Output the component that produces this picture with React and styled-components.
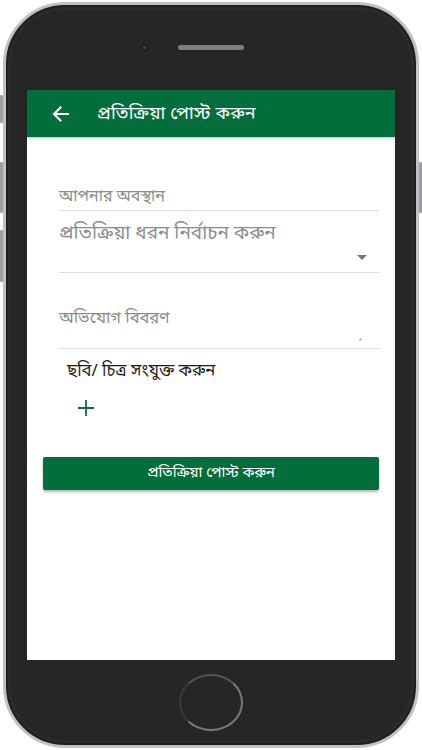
import React from 'react'
import styled, { createGlobalStyle } from 'styled-components'

const GlobalStyle = createGlobalStyle`
  html, body {
    margin: 0;
    padding: 0;
    background: #ffffff;
  }
  body {
    font-family: "Noto Sans Bengali", "Lohit Bengali", "Noto Sans", "DejaVu Sans", sans-serif;
  }
`

const Page = styled.div`
  width: 422px;
  height: 750px;
  padding: 2px 3px;
  box-sizing: border-box;
`

const Phone = styled.div`
  position: relative;
  width: 416px;
  height: 746px;
  box-sizing: border-box;
  border: 3px solid #c2c2c4;
  border-radius: 62px;
  background: #262626;
  box-shadow: inset 0 0 0 2px #1f1f1f, inset 0 0 0 5px #2b2b2b;
  display: flex;
  flex-direction: column;
  align-items: center;
`

const SideKey = styled.div`
  position: absolute;
  top: ${p => p.$top}px;
  height: ${p => p.$h}px;
  width: 3px;
  background: #9d9da2;
  border-radius: 1px;
  ${p => (p.$right ? 'right: -6px;' : 'left: -6px;')}
`

const TopBezel = styled.div`
  height: 85px;
  width: 100%;
  display: flex;
  justify-content: center;
  align-items: flex-start;
  padding-top: 39px;
  box-sizing: border-box;
  gap: 30px;
`

const Camera = styled.div`
  width: 7px;
  height: 7px;
  border-radius: 50%;
  background: #3c3c4c;
  box-shadow: inset 0 0 0 1.5px #1a1a1a;
  visibility: ${p => (p.$ghost ? 'hidden' : 'visible')};
`

const Speaker = styled.div`
  width: 66px;
  height: 5px;
  margin-top: 1px;
  border-radius: 3px;
  background: #7e7e7e;
`

const Screen = styled.div`
  width: 368px;
  height: 570px;
  background: #ffffff;
  display: flex;
  flex-direction: column;
`

const AppBar = styled.div`
  height: 47px;
  background: #036e3c;
  display: flex;
  align-items: center;
  padding-left: 25px;
  box-shadow: 0 1px 3px rgba(0, 0, 0, 0.25);
  color: #ffffff;
`

const Title = styled.div`
  margin-left: 28px;
  font-size: 18px;
  letter-spacing: 0.2px;
`

const Form = styled.div`
  padding: 49px 16px 0 16px;
  display: flex;
  flex-direction: column;
`

const Field = styled.div`
  margin-left: 16px;
  border-bottom: 1px solid #dedede;
  height: ${p => p.$h}px;
  box-sizing: border-box;
  position: relative;
`

const Placeholder = styled.div`
  color: #8c8c8c;
  font-size: ${p => p.$size}px;
  line-height: 1.2;
  padding-top: ${p => p.$pt || 0}px;
`

const Caret = styled.div`
  position: absolute;
  right: 12px;
  bottom: 12px;
  width: 0;
  height: 0;
  border-left: 5px solid transparent;
  border-right: 5px solid transparent;
  border-top: 5px solid #777777;
`

const Grip = styled.div`
  position: absolute;
  right: 17px;
  bottom: 8px;
  width: 3px;
  height: 1px;
  background: #9a9a9a;
  transform: rotate(-45deg);
`

const AttachLabel = styled.div`
  margin: 12px 0 0 24px;
  font-size: 16.7px;
  color: #1c1c1c;
`

const AddButton = styled.div`
  margin: 17px 0 0 35px;
  width: 16px;
  height: 16px;
  color: #0b6b36;
`

const SubmitButton = styled.button`
  margin-top: 41px;
  height: 33px;
  border: none;
  border-radius: 2px;
  background: #036e3c;
  color: #ffffff;
  font-family: inherit;
  font-size: 14.7px;
  box-shadow: 0 2px 3px rgba(0, 0, 0, 0.3);
  cursor: pointer;
`

const BottomBezel = styled.div`
  flex: 1;
  width: 100%;
  display: flex;
  align-items: center;
  justify-content: center;
`

const HomeButton = styled.div`
  width: 60px;
  height: 53px;
  border-radius: 50%;
  border: 2px solid #7a7a7a;
  border-left-color: #3a3a3a;
  border-top-color: #555555;
`

function App() {
  return (
    <Page>
      <GlobalStyle />
      <Phone>
        <SideKey $top={90} $h={28} />
        <SideKey $top={157} $h={51} />
        <SideKey $top={225} $h={52} />
        <SideKey $right $top={157} $h={51} />
        <TopBezel>
          <Camera />
          <Speaker />
          <Camera $ghost />
        </TopBezel>
        <Screen>
          <AppBar>
            <svg width="17" height="16" viewBox="0 0 17 16" fill="none" stroke="#fff" strokeWidth="2" strokeLinecap="square">
              <path d="M16 8H2.5" />
              <path d="M8.5 1.5L2 8l6.5 6.5" />
            </svg>
            <Title>প্রতিক্রিয়া পোস্ট করুন</Title>
          </AppBar>
          <Form>
            <Field $h={25}>
              <Placeholder $size={16} $pt={2}>আপনার অবস্থান</Placeholder>
            </Field>
            <Field $h={62}>
              <Placeholder $size={19} $pt={13}>প্রতিক্রিয়া ধরন নির্বাচন করুন</Placeholder>
              <Caret />
            </Field>
            <Field $h={76}>
              <Placeholder $size={16.5} $pt={37}>অভিযোগ বিবরণ</Placeholder>
              <Grip />
            </Field>
            <AttachLabel>ছবি/ চিত্র সংযুক্ত করুন</AttachLabel>
            <AddButton>
              <svg width="16" height="16" viewBox="0 0 16 16" stroke="currentColor" strokeWidth="1.8">
                <path d="M8 0v16M0 8h16" />
              </svg>
            </AddButton>
            <SubmitButton>প্রতিক্রিয়া পোস্ট করুন</SubmitButton>
          </Form>
        </Screen>
        <BottomBezel>
          <HomeButton />
        </BottomBezel>
      </Phone>
    </Page>
  )
}

export default App
